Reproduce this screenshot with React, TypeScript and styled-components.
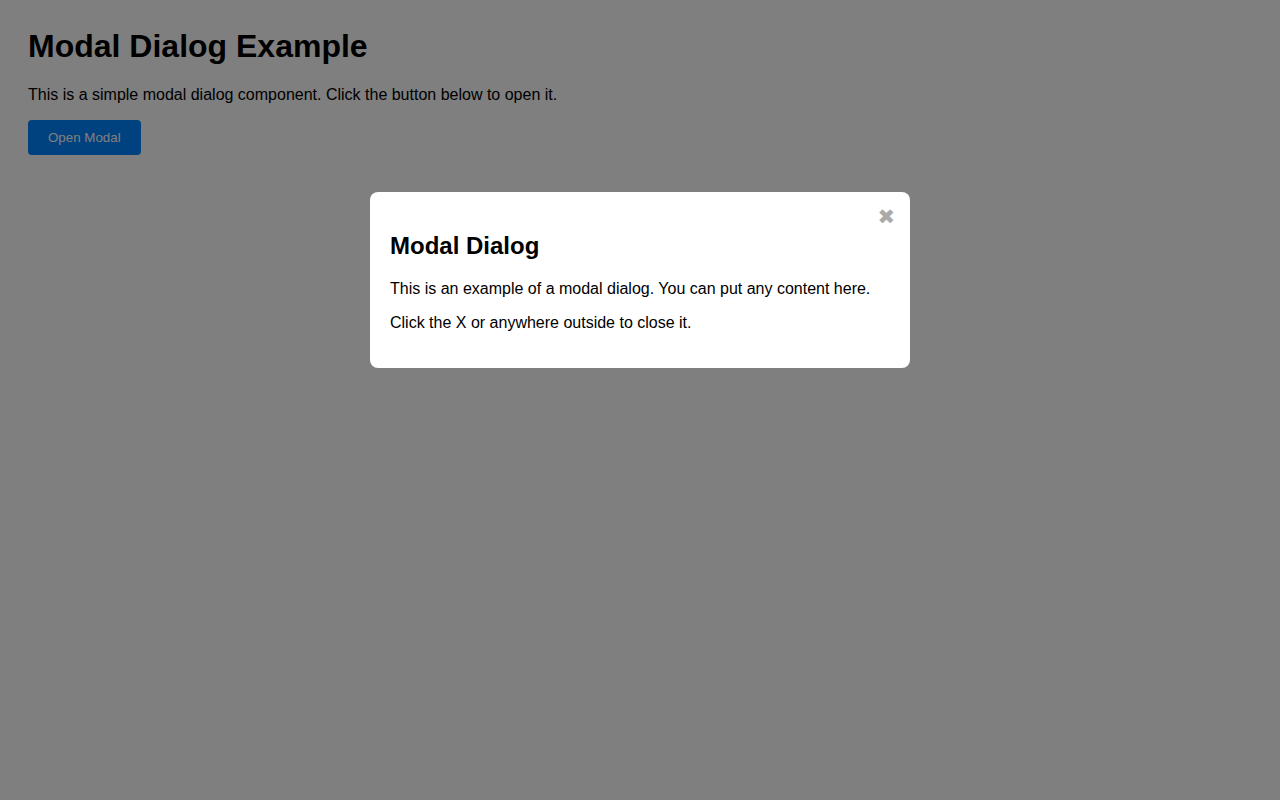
import { useState } from 'react'
import styled, { createGlobalStyle } from 'styled-components'

// Простая страница с модальным окном, которое открыто по умолчанию

const GlobalStyle = createGlobalStyle`
  html,
  body {
    margin: 0;
    background: #ffffff;
    font-family: 'Liberation Sans', Arial, sans-serif;
    color: #000000;
  }
`

const App = () => {
  const [isOpen, setIsOpen] = useState(true)

  const handleOpen = () => setIsOpen(true)
  const handleClose = () => setIsOpen(false)

  return (
    <>
      <GlobalStyle />
      <StyledPage>
        <StyledTitle>Modal Dialog Example</StyledTitle>
        <StyledText>
          This is a simple modal dialog component. Click the button below to open it.
        </StyledText>
        <StyledButton onClick={handleOpen}>Open Modal</StyledButton>
      </StyledPage>

      {isOpen && (
        <StyledOverlay onClick={handleClose}>
          <StyledModal onClick={e => e.stopPropagation()}>
            <StyledClose aria-label="close" onClick={handleClose}>
              ✖
            </StyledClose>
            <StyledModalTitle>Modal Dialog</StyledModalTitle>
            <StyledText>
              This is an example of a modal dialog. You can put any content here.
            </StyledText>
            <StyledText>Click the X or anywhere outside to close it.</StyledText>
          </StyledModal>
        </StyledOverlay>
      )}
    </>
  )
}

export default App

const StyledPage = styled.div`
  padding: 28px;
`

const StyledTitle = styled.h1`
  margin: 0 0 21px;
  font-size: 32px;
  font-weight: 700;
`

const StyledText = styled.p`
  margin: 16px 0;
  font-size: 16px;
`

const StyledButton = styled.button`
  padding: 10px 20px;
  border: none;
  border-radius: 4px;

  background: #0082ff;
  color: #ffffff;
  font-family: 'Liberation Sans', Arial, sans-serif;
  font-size: 13.33px;
  cursor: pointer;
`

const StyledOverlay = styled.div`
  position: fixed;
  inset: 0;
  z-index: 10;

  background: rgba(0, 0, 0, 0.5);
`

const StyledModal = styled.div`
  position: relative;
  box-sizing: border-box;
  width: 540px;
  margin: 15% auto 0;
  padding: 20px;

  border-radius: 8px;
  background: #ffffff;
`

const StyledClose = styled.button`
  position: absolute;
  top: 15px;
  right: 15px;
  padding: 0;
  border: none;

  background: transparent;
  color: #aaaaaa;
  font-family: 'DejaVu Sans', sans-serif;
  font-size: 21px;
  line-height: 1;
  cursor: pointer;
`

const StyledModalTitle = styled.h2`
  margin: 20px 0;
  font-size: 24px;
  font-weight: 700;
`
